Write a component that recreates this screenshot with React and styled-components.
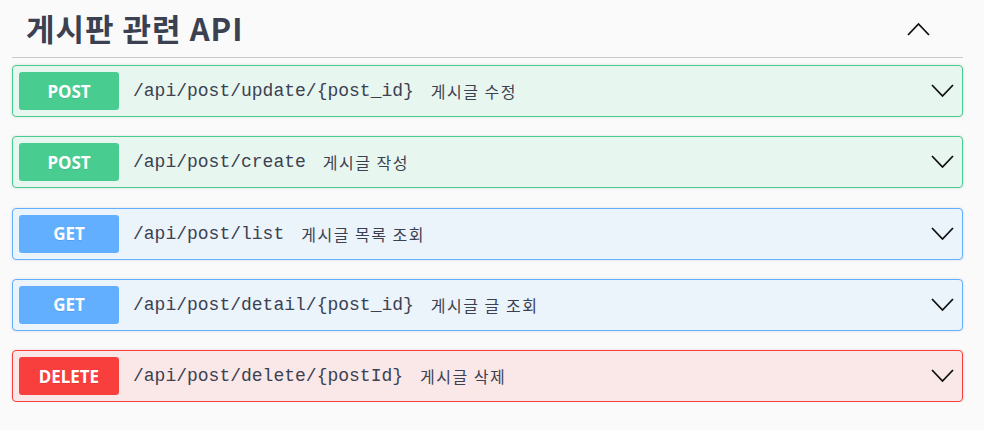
import React from "react";
import styled, { createGlobalStyle } from "styled-components";

const GlobalStyle = createGlobalStyle`
  body {
    margin: 0;
    background: #fafafa;
    font-family: "Noto Sans", "Noto Sans CJK KR", sans-serif;
    color: #3b4151;
  }
`;

const Page = styled.div`
  padding: 0 21px 0 12px;
`;

const TagHeader = styled.div`
  display: flex;
  align-items: center;
  justify-content: space-between;
  height: 57px;
  border-bottom: 1px solid #c9cacd;
  padding: 0 33px 0 14px;
  margin-bottom: 7px;
`;

const Title = styled.h3`
  margin: 0;
  font-family: "Noto Sans CJK KR", "Noto Sans", sans-serif;
  font-size: 31px;
  font-weight: 700;
  letter-spacing: 1px;
  color: #3b4151;
  padding-bottom: 3px;
`;

const Chevron = styled.svg`
  display: block;
  width: 23px;
  height: 14px;
  flex-shrink: 0;
`;

const List = styled.div`
  display: flex;
  flex-direction: column;
  gap: 19.25px;
`;

const colors = {
  POST: { main: "#49cc90", bg: "#e8f6f0" },
  GET: { main: "#61affe", bg: "#ebf3fb" },
  DELETE: { main: "#f93e3e", bg: "#fae7e7" },
};

const Block = styled.div`
  display: flex;
  align-items: center;
  height: 50px;
  padding: 0 8px 0 6px;
  border: 1px solid ${(p) => colors[p.$method].main};
  background: ${(p) => colors[p.$method].bg};
  border-radius: 4px;
  box-shadow: 0 0 3px rgba(0, 0, 0, 0.12);
`;

const Badge = styled.span`
  display: flex;
  align-items: center;
  justify-content: center;
  width: 100px;
  height: 38px;
  border-radius: 3px;
  background: ${(p) => colors[p.$method].main};
  color: #fff;
  font-family: "Noto Sans", sans-serif;
  font-weight: 700;
  font-size: 17px;
  text-shadow: 0 1px 0 rgba(0, 0, 0, 0.1);
`;

const Path = styled.span`
  margin-left: 14px;
  font-family: "Liberation Mono", "Noto Sans CJK KR", monospace;
  font-size: 18px;
  color: #3b4151;
`;

const Desc = styled.span`
  margin-left: 17px;
  font-family: "Noto Sans CJK KR", sans-serif;
  font-size: 16px;
  letter-spacing: 1.5px;
  color: #3b4151;
  flex: 1;
`;

const ops = [
  { method: "POST", path: "/api/post/update/{post_id}", desc: "게시글 수정" },
  { method: "POST", path: "/api/post/create", desc: "게시글 작성" },
  { method: "GET", path: "/api/post/list", desc: "게시글 목록 조회" },
  { method: "GET", path: "/api/post/detail/{post_id}", desc: "게시글 글 조회" },
  { method: "DELETE", path: "/api/post/delete/{postId}", desc: "게시글 삭제" },
];

const App = () => {
  return (
    <Page>
      <GlobalStyle />
      <TagHeader>
        <Title>게시판 관련 API</Title>
        <Chevron viewBox="0 0 23 14">
          <path d="M1 13 L11.5 2 L22 13" fill="none" stroke="#111" strokeWidth="1.8" />
        </Chevron>
      </TagHeader>
      <List>
        {ops.map((op) => (
          <Block key={op.path} $method={op.method}>
            <Badge $method={op.method}>{op.method}</Badge>
            <Path>{op.path}</Path>
            <Desc>{op.desc}</Desc>
            <Chevron viewBox="0 0 23 14">
              <path d="M1 1 L11.5 12 L22 1" fill="none" stroke="#111" strokeWidth="1.8" />
            </Chevron>
          </Block>
        ))}
      </List>
    </Page>
  );
};

export default App;
